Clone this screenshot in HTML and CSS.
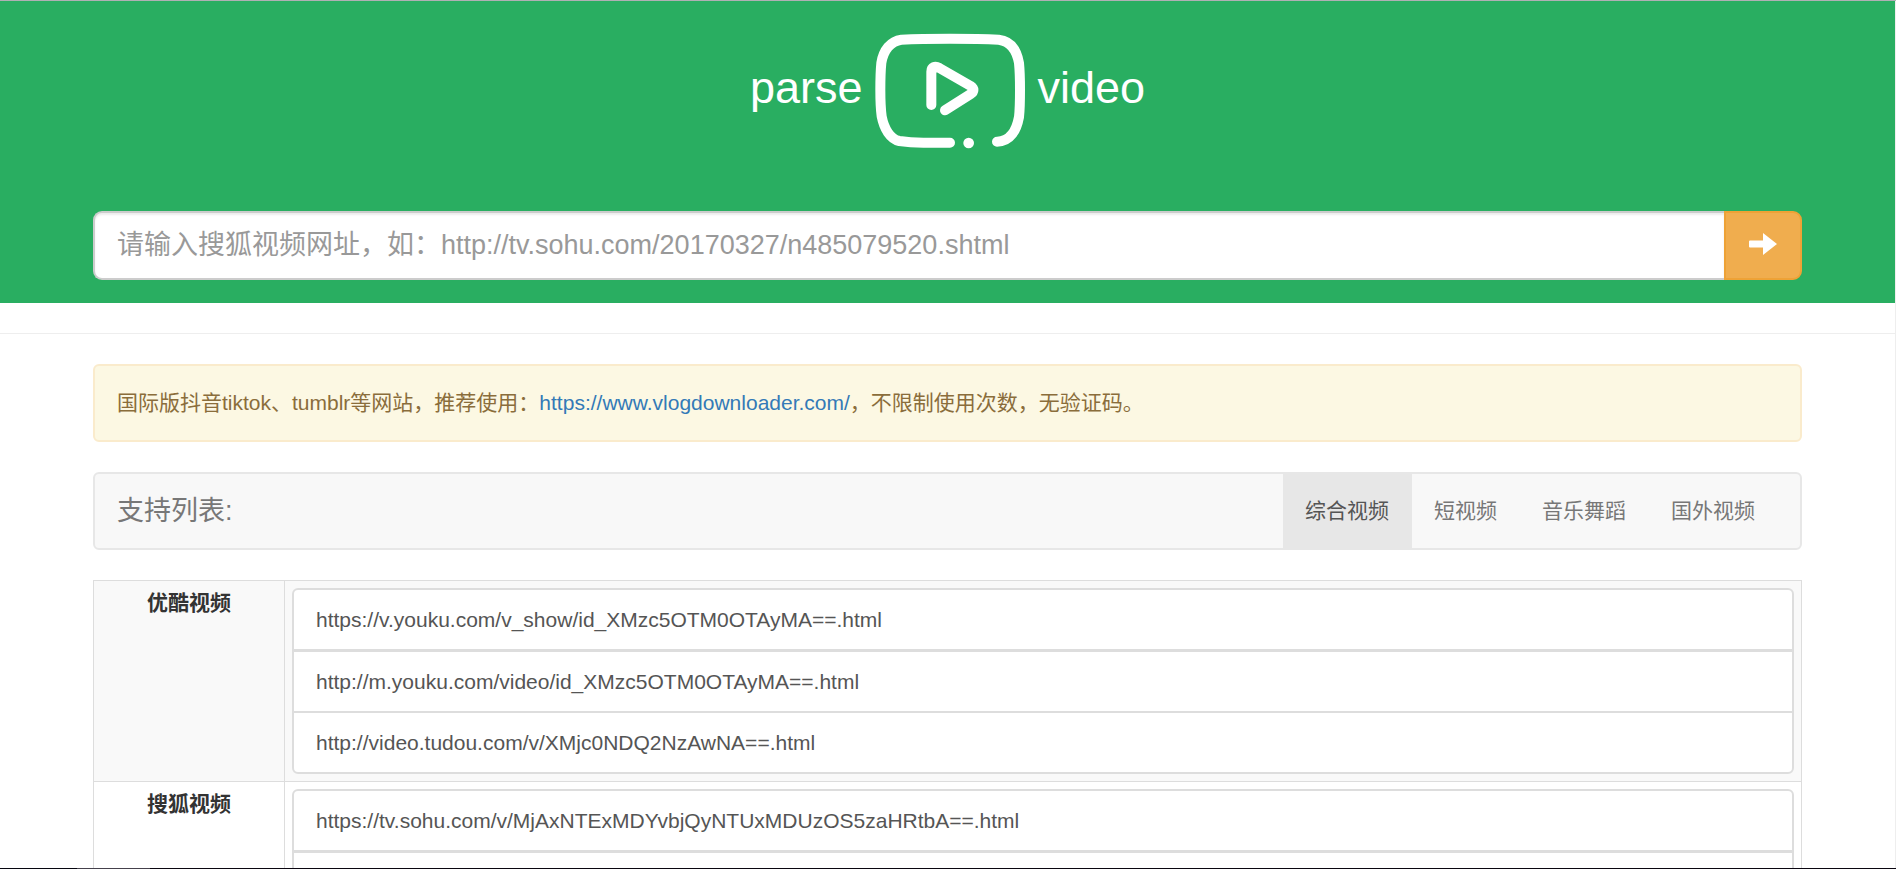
FILE: index.html
```html
<!DOCTYPE html>
<html lang="zh-CN">
<head>
<meta charset="utf-8">
<title>parse video</title>
<meta name="viewport" content="width=device-width, initial-scale=1">
<link rel="stylesheet" href="styles.css">
</head>
<body class="window">
<div class="page">
  <header class="masthead">
    <h1 class="brand">parse
      <svg class="brand-logo" viewBox="435 100 450 348" aria-hidden="true">
        <g fill="none" stroke="#fff" stroke-width="30" stroke-linecap="round" stroke-linejoin="round">
          <path d="M660 429H580Q540 429 508 424C480 418 462 386 455 350Q451 320 451 270Q451 220 454 190C460 152 482 124 514 120Q570 117 660 117Q750 117 806 120C840 124 860 150 867 190Q870 220 870 270Q870 325 867 352C860 390 842 426 801 426"/>
          <path d="M604 316V216C604 202 615 198 628 205L722 259C733 266 733 276 722 283L645 332"/>
        </g>
        <circle cx="716" cy="430" r="16" fill="#fff"/>
      </svg>
      video</h1>
    <form class="search">
      <input class="search-input" type="text" aria-label="视频网址" placeholder="请输入搜狐视频网址，如：http://tv.sohu.com/20170327/n485079520.shtml">
      <button class="search-button" type="button" aria-label="解析">
        <svg class="search-arrow" viewBox="0 0 28 22" aria-hidden="true"><path fill="#fff" d="M1 7.500H14V0L28 11L14 22V14.500H1Q0 14.500 0 13.500V8.500Q0 7.500 1 7.500Z"/></svg>
      </button>
    </form>
  </header>
  <hr class="rule">
  <main class="container">
    <p class="alert">国际版抖音tiktok、tumblr等网站，推荐使用：<a class="alert-link" href="https://www.vlogdownloader.com/">https://www.vlogdownloader.com/</a>，不限制使用次数，无验证码。</p>
    <nav class="navbar">
      <span class="navbar-title">支持列表:</span>
      <ul class="tabs">
        <li><a class="tab tab-active" href="#general">综合视频</a></li>
        <li><a class="tab" href="#short">短视频</a></li>
        <li><a class="tab" href="#music">音乐舞蹈</a></li>
        <li><a class="tab" href="#foreign">国外视频</a></li>
      </ul>
    </nav>
    <table class="sites">
      <tbody>
        <tr class="site">
          <th class="site-name" scope="row">优酷视频</th>
          <td class="site-links">
            <ul class="links">
              <li><a class="link" href="#y1">https://v.youku.com/v_show/id_XMzc5OTM0OTAyMA==.html</a></li>
              <li><a class="link" href="#y2">http://m.youku.com/video/id_XMzc5OTM0OTAyMA==.html</a></li>
              <li><a class="link" href="#y3">http://video.tudou.com/v/XMjc0NDQ2NzAwNA==.html</a></li>
            </ul>
          </td>
        </tr>
        <tr class="site">
          <th class="site-name" scope="row">搜狐视频</th>
          <td class="site-links">
            <ul class="links">
              <li><a class="link" href="#s1">https://tv.sohu.com/v/MjAxNTExMDYvbjQyNTUxMDUzOS5zaHRtbA==.html</a></li>
              <li><span class="link"></span></li>
            </ul>
          </td>
        </tr>
      </tbody>
    </table>
  </main>
</div>
<div class="window-edge"></div>
</body>
</html>
```
FILE: styles.css
```css
* {
  box-sizing: border-box;
}

.window {
  display: flex;
  flex-direction: column;
  height: 100vh;
  margin: 0;
  overflow: hidden;
  border-top: 1px solid #b0b0b4;
  background: #fff;
  color: #333;
  font: 21px/30px "Liberation Sans", "Noto Sans CJK SC", sans-serif;
}

.page {
  flex: 1;
  min-height: 0;
  overflow: hidden;
  border-right: 1px solid #eee;
}

.window-edge {
  flex: none;
  height: 1px;
  background: linear-gradient(to right, #06060f 77px, #45414c 77px, #45414c 150px, #0a0610 150px);
}

.masthead {
  padding: 32px 93px 23px;
  background: #29ae61;
}

.brand {
  margin: 0 0 62px;
  color: #fff;
  font-size: 45px;
  font-weight: 400;
  line-height: 50px;
  text-align: center;
}

.brand-logo {
  width: 150px;
  height: 116px;
  vertical-align: middle;
}

.search {
  display: flex;
}

.search-input {
  flex: 1;
  min-width: 0;
  height: 69px;
  padding: 0 22px;
  border: 2px solid #ccc;
  border-right: 0;
  border-radius: 9px 0 0 9px;
  background: #fff;
  box-shadow: inset 0 2px 2px rgba(0, 0, 0, 0.075);
  color: #555;
  font: inherit;
  font-size: 27px;
}

.search-input::placeholder {
  color: #999;
  opacity: 1;
}

.search-button {
  display: flex;
  align-items: center;
  justify-content: center;
  width: 78px;
  padding: 0 0 3px;
  border: 2px solid #eea236;
  border-radius: 0 9px 9px 0;
  background: #f0ad4e;
}

.search-arrow {
  width: 28px;
  height: 22px;
}

.rule {
  height: 1px;
  margin: 30px 0;
  border: 0;
  background: #eee;
}

.container {
  padding: 0 93px;
}

.alert {
  margin: 0 0 30px;
  padding: 22px;
  border: 2px solid #faebcc;
  border-radius: 6px;
  background: #fcf8e3;
  color: #8a6d3b;
}

.alert-link {
  color: #337ab7;
  text-decoration: none;
}

.navbar {
  display: flex;
  justify-content: space-between;
  margin-bottom: 30px;
  padding: 0 22px;
  border: 2px solid #e7e7e7;
  border-radius: 6px;
  background: #f8f8f8;
  color: #777;
}

.navbar-title {
  padding: 22px 0;
  font-size: 27px;
}

.tabs,
.links {
  margin: 0;
  padding: 0;
  list-style: none;
}

.tabs {
  display: flex;
}

.tab {
  display: block;
  padding: 22px 23px 22px 22px;
  color: #777;
  text-decoration: none;
}

.tab-active {
  background: #e7e7e7;
  color: #555;
}

.sites {
  width: 100%;
  border-collapse: collapse;
  table-layout: fixed;
}

.site:nth-child(odd) {
  background: #f9f9f9;
}

.site-name,
.site-links {
  padding: 7px;
  border: 1px solid #ddd;
  vertical-align: top;
}

.site-name {
  width: 191px;
}

.link {
  display: block;
  min-height: 63px;
  padding: 15px 22px;
  border: 2px solid #ddd;
  background: #fff;
  color: #555;
  line-height: 29px;
  text-decoration: none;
}

.links li + li {
  margin-top: -1px;
}

.links li + li + li {
  margin-top: -2px;
}

.links li:first-child .link {
  border-radius: 6px 6px 0 0;
}

.links li:last-child .link {
  border-radius: 0 0 6px 6px;
}
```
